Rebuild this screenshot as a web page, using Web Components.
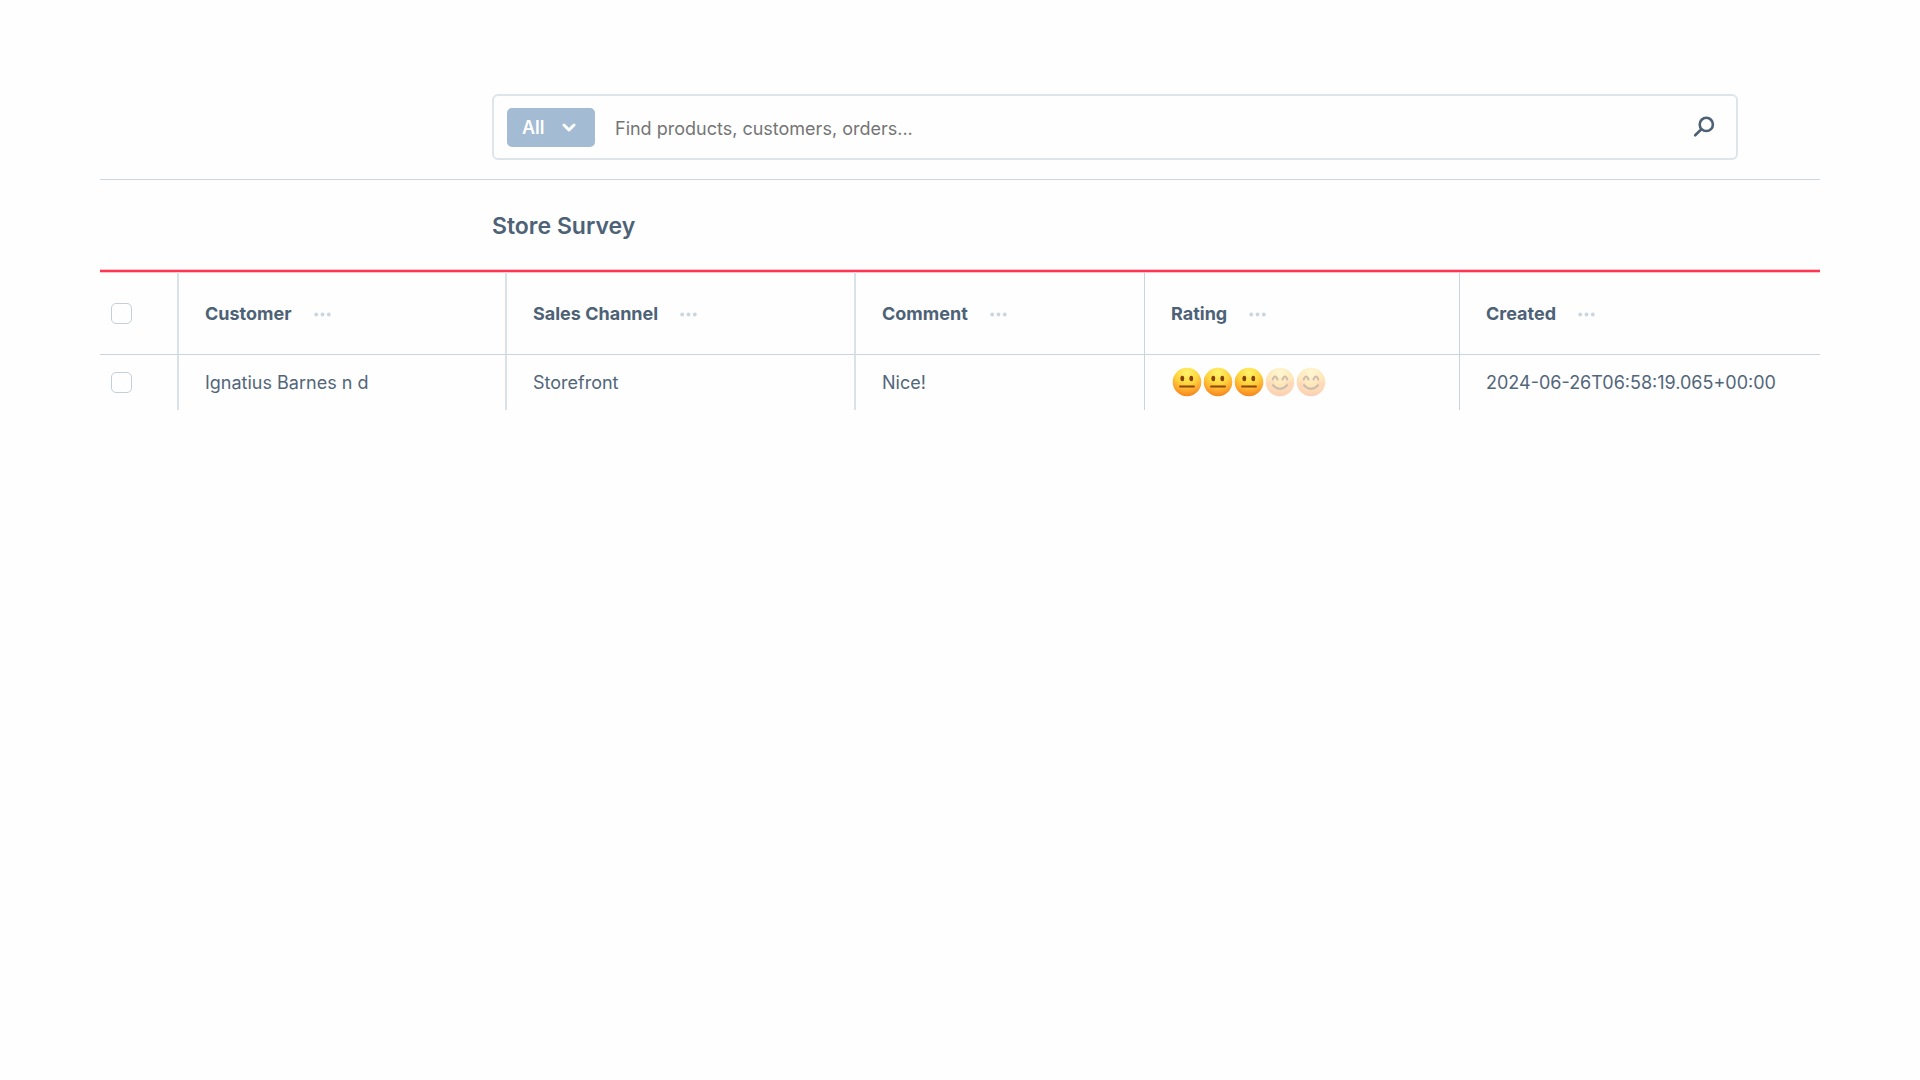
<!DOCTYPE html>
<html lang="en">
<head>
<meta charset="utf-8">
<title>Store Survey</title>
<style>
  body { margin: 0; background: #fefefe; color: #52667a; font: 18px/24px Inter, "Liberation Sans", sans-serif; }
</style>
</head>
<body>
<survey-page>
  <search-bar slot="search" placeholder="Find products, customers, orders..."></search-bar>
  <span slot="title">Store Survey</span>
  <survey-grid></survey-grid>
</survey-page>

<script>
const shadow = (host, html) => {
  const template = document.createElement('template');
  template.innerHTML = html;
  host.attachShadow({ mode: 'open' }).append(template.content.cloneNode(true));
};

class SurveyPage extends HTMLElement {
  constructor() {
    super();
    shadow(this, `
      <style>
        :host { display: block; padding: 94px 100px 40px; }
        header { padding: 0 82px 19px 392px; border-bottom: 1px solid #cbd7e1; }
        h1 { margin: 0; padding: 31px 82px 29px 392px; font-size: 23px; line-height: 30px; font-weight: 600; color: #4d6276; }
      </style>
      <header><slot name="search"></slot></header>
      <h1><slot name="title"></slot></h1>
      <main><slot></slot></main>`);
  }
}

class SearchBar extends HTMLElement {
  constructor() {
    super();
    shadow(this, `
      <style>
        :host { display: block; }
        form { display: flex; align-items: center; box-sizing: border-box; height: 66px; padding: 0 21px 0 13px; border: 2px solid #dde5ea; border-radius: 6px; }
        .type { display: grid; grid-template-columns: 88px; align-items: center; }
        .type > * { grid-area: 1 / 1; }
        select { appearance: none; width: 100%; height: 39px; margin: 0; padding: 2px 15px 0; border: 0; border-radius: 5px; background: #a3bbd3; color: #fff; font: inherit; font-weight: 600; }
        .type svg { justify-self: end; margin-right: 19px; pointer-events: none; }
        input { flex: 1; min-width: 0; padding: 2px 20px 0; border: 0; outline: 0; background: none; color: #52667a; font: inherit; height: 40px; box-sizing: border-box; }
        input::placeholder { color: #757575; opacity: 1; }
        button { display: block; padding: 0; border: 0; background: none; }
        svg { display: block; }
      </style>
      <form>
        <div class="type">
          <select aria-label="Search in"><option>All</option><option>Products</option><option>Customers</option><option>Orders</option></select>
          <svg width="14" height="9" viewBox="0 0 14 9" fill="none" stroke="#fff" stroke-width="3" stroke-linecap="round" stroke-linejoin="round"><path d="M2 2l5 5 5-5"/></svg>
        </div>
        <input type="text" aria-label="Search">
        <button type="button" aria-label="Search">
          <svg width="22" height="22" viewBox="0 0 22 22" fill="none" stroke="#4c6175" stroke-linecap="round"><circle cx="13.300" cy="8.400" r="6.600" stroke-width="2.600"/><path d="M8.300 13.300L2.200 19.300" stroke-width="2.600"/></svg>
        </button>
      </form>`);
    this.shadowRoot.querySelector('input').placeholder = this.getAttribute('placeholder');
  }
}

class CheckBox extends HTMLElement {
  constructor() {
    super();
    shadow(this, `
      <style>
        :host { display: block; }
        input { appearance: none; display: block; box-sizing: border-box; width: 21px; height: 21px; margin: 0; border: 1px solid #c3cfd9; border-radius: 5px; }
        input:checked { background: #a3bbd3; }
      </style>
      <input type="checkbox">`);
    this.shadowRoot.querySelector('input').setAttribute('aria-label', this.getAttribute('label'));
  }
}

class ColumnHead extends HTMLElement {
  constructor() {
    super();
    shadow(this, `
      <style>
        :host { display: flex; align-items: center; gap: 22px; padding-top: 2px; font-weight: 700; color: #4d6276; }
        button { padding: 0; border: 0; background: none; }
        svg { display: block; }
      </style>
      <slot></slot>
      <button type="button" aria-label="Column options"><svg width="17" height="5" viewBox="0 0 17 5" fill="#c9d5df"><circle cx="2.200" cy="2.500" r="1.900"/><circle cx="8.500" cy="2.500" r="1.900"/><circle cx="14.800" cy="2.500" r="1.900"/></svg></button>`);
  }
}

class FaceRating extends HTMLElement {
  constructor() {
    super();
    const value = Number(this.getAttribute('value'));
    const neutral = `<g fill="#864000"><ellipse cx="10.300" cy="11.500" rx="1.900" ry="2.800"/><ellipse cx="19.300" cy="11.500" rx="1.900" ry="2.800"/></g><path d="M8 19.500h14" stroke="#8a4700" stroke-width="1.800" stroke-linecap="round"/>`;
    const smile = `<g fill="none" stroke="#774518" stroke-linecap="round" stroke-linejoin="round"><path d="M7.700 12.500Q10 6.500 12.500 12.500M17.500 12.500Q20 6.500 22.300 12.500" stroke-width="2.100"/><path d="M8 18.200Q15 25.500 22 18.200" stroke-width="2.100"/></g>`;
    const face = i => `
      <svg class="${i < value ? 'on' : 'off'}" width="31" height="30" viewBox="0 0 31 30">
        <circle cx="15" cy="15" r="14.300" fill="url(#${i < value ? 'gold' : 'blush'})"/>
        ${i < value ? '' : '<g fill="#ff7447" opacity=".35"><ellipse cx="6" cy="17" rx="4" ry="3"/><ellipse cx="24" cy="17" rx="4" ry="3"/></g>'}
        ${i < value ? neutral : smile}
      </svg>`;
    shadow(this, `
      <style>
        :host { display: flex; padding: 0 0 2px 1px; }
        svg { display: block; }
        .off { opacity: .35; }
        .defs { width: 0; height: 0; }
      </style>
      <svg class="defs" aria-hidden="true"><defs>
        <radialGradient id="gold" cx=".5" cy=".18" r=".85"><stop offset="0" stop-color="#fff36a"/><stop offset=".45" stop-color="#ffd63f"/><stop offset=".75" stop-color="#ffa62c"/><stop offset="1" stop-color="#f07f1b"/></radialGradient>
        <radialGradient id="blush" cx=".5" cy=".15" r=".9"><stop offset="0" stop-color="#ffec80"/><stop offset=".5" stop-color="#ffc040"/><stop offset="1" stop-color="#f86a25"/></radialGradient>
      </defs></svg>
      ${[0, 1, 2, 3, 4].map(face).join('')}`);
    this.setAttribute('role', 'img');
    this.setAttribute('aria-label', value + ' of 5');
  }
}

class SurveyGrid extends HTMLElement {
  constructor() {
    super();
    shadow(this, `
      <style>
        :host { display: block; border-top: 2px solid #ff3652; box-shadow: 0 -1px #ffc2ca, inset 0 1px #ffc2ca; }
        table { width: 100%; border-collapse: separate; border-spacing: 0; table-layout: fixed; }
        th, td { padding: 0 0 0 26px; text-align: left; vertical-align: middle; font-weight: 400; white-space: nowrap; }
        th { height: 82px; border-bottom: 1px solid #cbd5de; }
        td { height: 55px; }
        th + th, td + td { border-left: 2px solid #dae2e8; }
        :is(th, td):nth-child(n + 5) { border-left: 1px solid #c9d4dc; }
        th:first-child, td:first-child { padding-left: 11px; }
        .select { width: 77px; } .customer { width: 328px; } .channel { width: 349px; } .comment { width: 290px; } .rating { width: 315px; }
      </style>
      <table>
        <colgroup><col class="select"><col class="customer"><col class="channel"><col class="comment"><col class="rating"><col></colgroup>
        <thead><tr>
          <th><check-box label="Select all"></check-box></th>
          <th><column-head>Customer</column-head></th>
          <th><column-head>Sales Channel</column-head></th>
          <th><column-head>Comment</column-head></th>
          <th><column-head>Rating</column-head></th>
          <th><column-head>Created</column-head></th>
        </tr></thead>
        <tbody><tr>
          <td><check-box label="Select row"></check-box></td>
          <td>Ignatius Barnes n d</td>
          <td>Storefront</td>
          <td>Nice!</td>
          <td><face-rating value="3"></face-rating></td>
          <td>2024-06-26T06:58:19.065+00:00</td>
        </tr></tbody>
      </table>`);
  }
}

customElements.define('check-box', CheckBox);
customElements.define('column-head', ColumnHead);
customElements.define('face-rating', FaceRating);
customElements.define('search-bar', SearchBar);
customElements.define('survey-grid', SurveyGrid);
customElements.define('survey-page', SurveyPage);
</script>
</body>
</html>
